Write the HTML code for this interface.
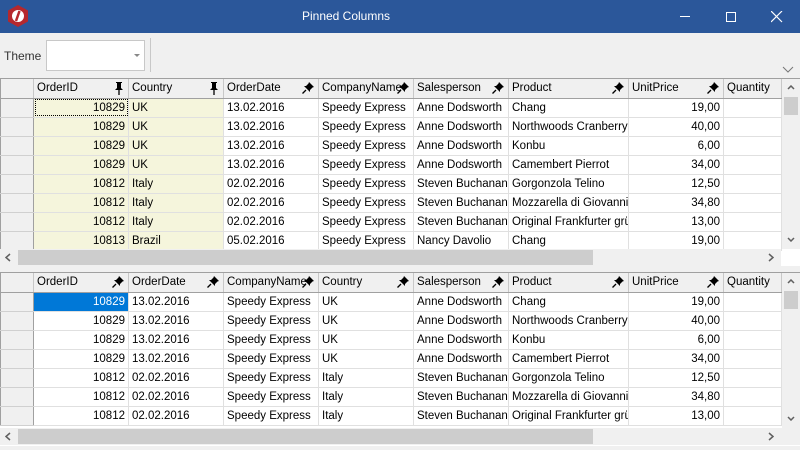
<!DOCTYPE html>
<html><head><style>
*{margin:0;padding:0;box-sizing:border-box}
body{width:800px;height:450px;background:#f0f0f0;font-family:"Liberation Sans",sans-serif;font-size:12px;position:relative;overflow:hidden;color:#000}
.title{position:absolute;left:0;top:0;width:800px;height:33px;background:#2b579a;color:#fff}
.title .t{position:absolute;left:246px;width:200px;top:9px;text-align:center;font-size:12px}
.grid{position:absolute;left:0;width:800px;background:#fff;border-top:1px solid #a0a0a0;overflow:hidden}
table{border-collapse:collapse;table-layout:fixed;position:absolute;left:0;top:0;width:781px}
td{height:19px;border-right:1px solid #e0e0e0;border-bottom:1px solid #e0e0e0;padding:0 3px;white-space:nowrap;overflow:hidden;font-size:11.5px}
tr.h td{background:#f0f0f0;border-right:1px solid #c8c8c8;border-bottom:1px solid #a0a0a0;position:relative;padding-right:16px;text-overflow:clip}
td.rh{background:#f0f0f0;border-right:1px solid #a0a0a0;border-left:1px solid #a0a0a0;border-bottom:1px solid #d0d0d0}
td.r{text-align:right}
td.p{background:#f5f5dc}
td.sel{background:#0078d7;color:#fff}
.pin{position:absolute;right:4px;top:3px}
.vs{position:absolute;right:0;width:18px;background:#f0f0f0}
.hs{position:absolute;left:0;height:17px;background:#f0f0f0;width:781px}
</style></head><body>
<div class="title">
<svg style="position:absolute;left:6px;top:4px" width="24" height="24" viewBox="0 0 24 24"><polygon points="12,1 22,6.5 22,17.5 12,23 2,17.5 2,6.5" fill="#b5282d"/><circle cx="12" cy="12" r="6" fill="#fff"/><path d="M13.5 7 L10 17" stroke="#b5282d" stroke-width="2.5"/></svg>
<div class="t">Pinned Columns</div>
<div style="position:absolute;left:680px;top:16px;width:10px;height:1px;background:#fff"></div>
<div style="position:absolute;left:726px;top:12px;width:10px;height:10px;border:1px solid #fff"></div>
<svg style="position:absolute;left:771px;top:11px" width="12" height="12"><path d="M0 0L11 11M11 0L0 11" stroke="#fff" stroke-width="1.2"/></svg>
</div>
<div style="position:absolute;left:4px;top:49px;color:#333">Theme</div>
<div style="position:absolute;left:46px;top:40px;width:99px;height:31px;background:#fff;border:1px solid #c8c8c8"></div>
<svg style="position:absolute;left:134px;top:54px" width="6" height="4"><path d="M0 0H6L3 3Z" fill="#888"/></svg>
<div style="position:absolute;left:150px;top:38px;width:1px;height:34px;background:#c8c8c8"></div>
<svg style="position:absolute;left:782px;top:66px" width="12" height="7"><path d="M1 1L6 6L11 1" stroke="#777" fill="none"/></svg>

<div class="grid" style="top:78px;height:188px">
<table id="t1"></table>
<div class="vs" style="top:0;height:170px"><div style="position:absolute;left:2px;top:18px;width:14px;height:18px;background:#cdcdcd"></div><svg style="position:absolute;left:5px;top:6px" width="8" height="5"><path d="M1 4L4 1L7 4" stroke="#606060" fill="none" stroke-width="1.5"/></svg><svg style="position:absolute;left:5px;top:158px" width="8" height="5"><path d="M1 1L4 4L7 1" stroke="#606060" fill="none" stroke-width="1.5"/></svg></div>
<div class="hs" style="top:170px"><div style="position:absolute;left:18px;top:1px;width:575px;height:15px;background:#cdcdcd"></div><svg style="position:absolute;left:5px;top:4px" width="6" height="9"><path d="M5 1L1 4.5L5 8" stroke="#606060" fill="none" stroke-width="1.5"/></svg><svg style="position:absolute;left:768px;top:4px" width="6" height="9"><path d="M1 1L5 4.5L1 8" stroke="#606060" fill="none" stroke-width="1.5"/></svg></div>
</div>

<div class="grid" style="top:272px;height:174px">
<table id="t2"></table>
<div class="vs" style="top:0;height:155px"><div style="position:absolute;left:2px;top:18px;width:14px;height:18px;background:#cdcdcd"></div><svg style="position:absolute;left:5px;top:6px" width="8" height="5"><path d="M1 4L4 1L7 4" stroke="#606060" fill="none" stroke-width="1.5"/></svg><svg style="position:absolute;left:5px;top:143px" width="8" height="5"><path d="M1 1L4 4L7 1" stroke="#606060" fill="none" stroke-width="1.5"/></svg></div>
<div class="hs" style="top:155px;width:800px"><div style="position:absolute;left:18px;top:1px;width:575px;height:15px;background:#cdcdcd"></div><svg style="position:absolute;left:5px;top:4px" width="6" height="9"><path d="M5 1L1 4.5L5 8" stroke="#606060" fill="none" stroke-width="1.5"/></svg><svg style="position:absolute;left:768px;top:4px" width="6" height="9"><path d="M1 1L5 4.5L1 8" stroke="#606060" fill="none" stroke-width="1.5"/></svg></div>
</div>

<script>
var W=[33,95,95,95,95,95,120,95,58];
var slant='<svg class="pin" width="12" height="12" viewBox="0 0 12 12"><path d="M7 0L12 5L10.5 5.5L8 8L8 10L2 4L4 4L6.5 1.5Z" fill="#000"/><path d="M4 8L0.5 11.5" stroke="#000" stroke-width="1.3"/></svg>';
var vert='<svg class="pin" width="10" height="13" viewBox="0 0 10 13"><path d="M2 0H8V1H7V6L9 8H1L3 6V1H2Z" fill="#000"/><path d="M5 8V13" stroke="#000" stroke-width="1.3"/></svg>';
var data=[["10829","UK","13.02.2016","Speedy Express","Anne Dodsworth","Chang","19,00"],
["10829","UK","13.02.2016","Speedy Express","Anne Dodsworth","Northwoods Cranberry Sauce","40,00"],
["10829","UK","13.02.2016","Speedy Express","Anne Dodsworth","Konbu","6,00"],
["10829","UK","13.02.2016","Speedy Express","Anne Dodsworth","Camembert Pierrot","34,00"],
["10812","Italy","02.02.2016","Speedy Express","Steven Buchanan","Gorgonzola Telino","12,50"],
["10812","Italy","02.02.2016","Speedy Express","Steven Buchanan","Mozzarella di Giovanni","34,80"],
["10812","Italy","02.02.2016","Speedy Express","Steven Buchanan","Original Frankfurter grüne Soße","13,00"],
["10813","Brazil","05.02.2016","Speedy Express","Nancy Davolio","Chang","19,00"]];
function build(id,order,n,pinned,first){
 var hdr=["OrderID","Country","OrderDate","CompanyName","Salesperson","Product","UnitPrice","Quantity"];
 var h='<colgroup>'+W.map(function(w){return '<col style="width:'+w+'px">'}).join('')+'</colgroup><tr class="h"><td class="rh" style="border-bottom:1px solid #a0a0a0"></td>';
 order.forEach(function(c,i){h+='<td>'+hdr[c]+(c==7?'':(i<pinned?vert:slant))+'</td>'});
 h+='</tr>';
 for(var r=0;r<n;r++){h+='<tr><td class="rh"></td>';
  order.forEach(function(c,i){var v=c==7?'':data[r][c];var cl=[];if(c==0||c==6)cl.push('r');if(i<pinned)cl.push('p');if(first&&r==0&&i==0)cl.push('sel');
   var st=(!first&&r==0&&i==0)?' style="outline:1px dotted #000;outline-offset:-2px"':'';
   h+='<td class="'+cl.join(' ')+'"'+st+'>'+v+'</td>'});h+='</tr>'}
 document.getElementById(id).innerHTML=h;
}
build('t1',[0,1,2,3,4,5,6,7],8,2,false);
build('t2',[0,2,3,1,4,5,6,7],7,0,true);
</script>
</body></html>
